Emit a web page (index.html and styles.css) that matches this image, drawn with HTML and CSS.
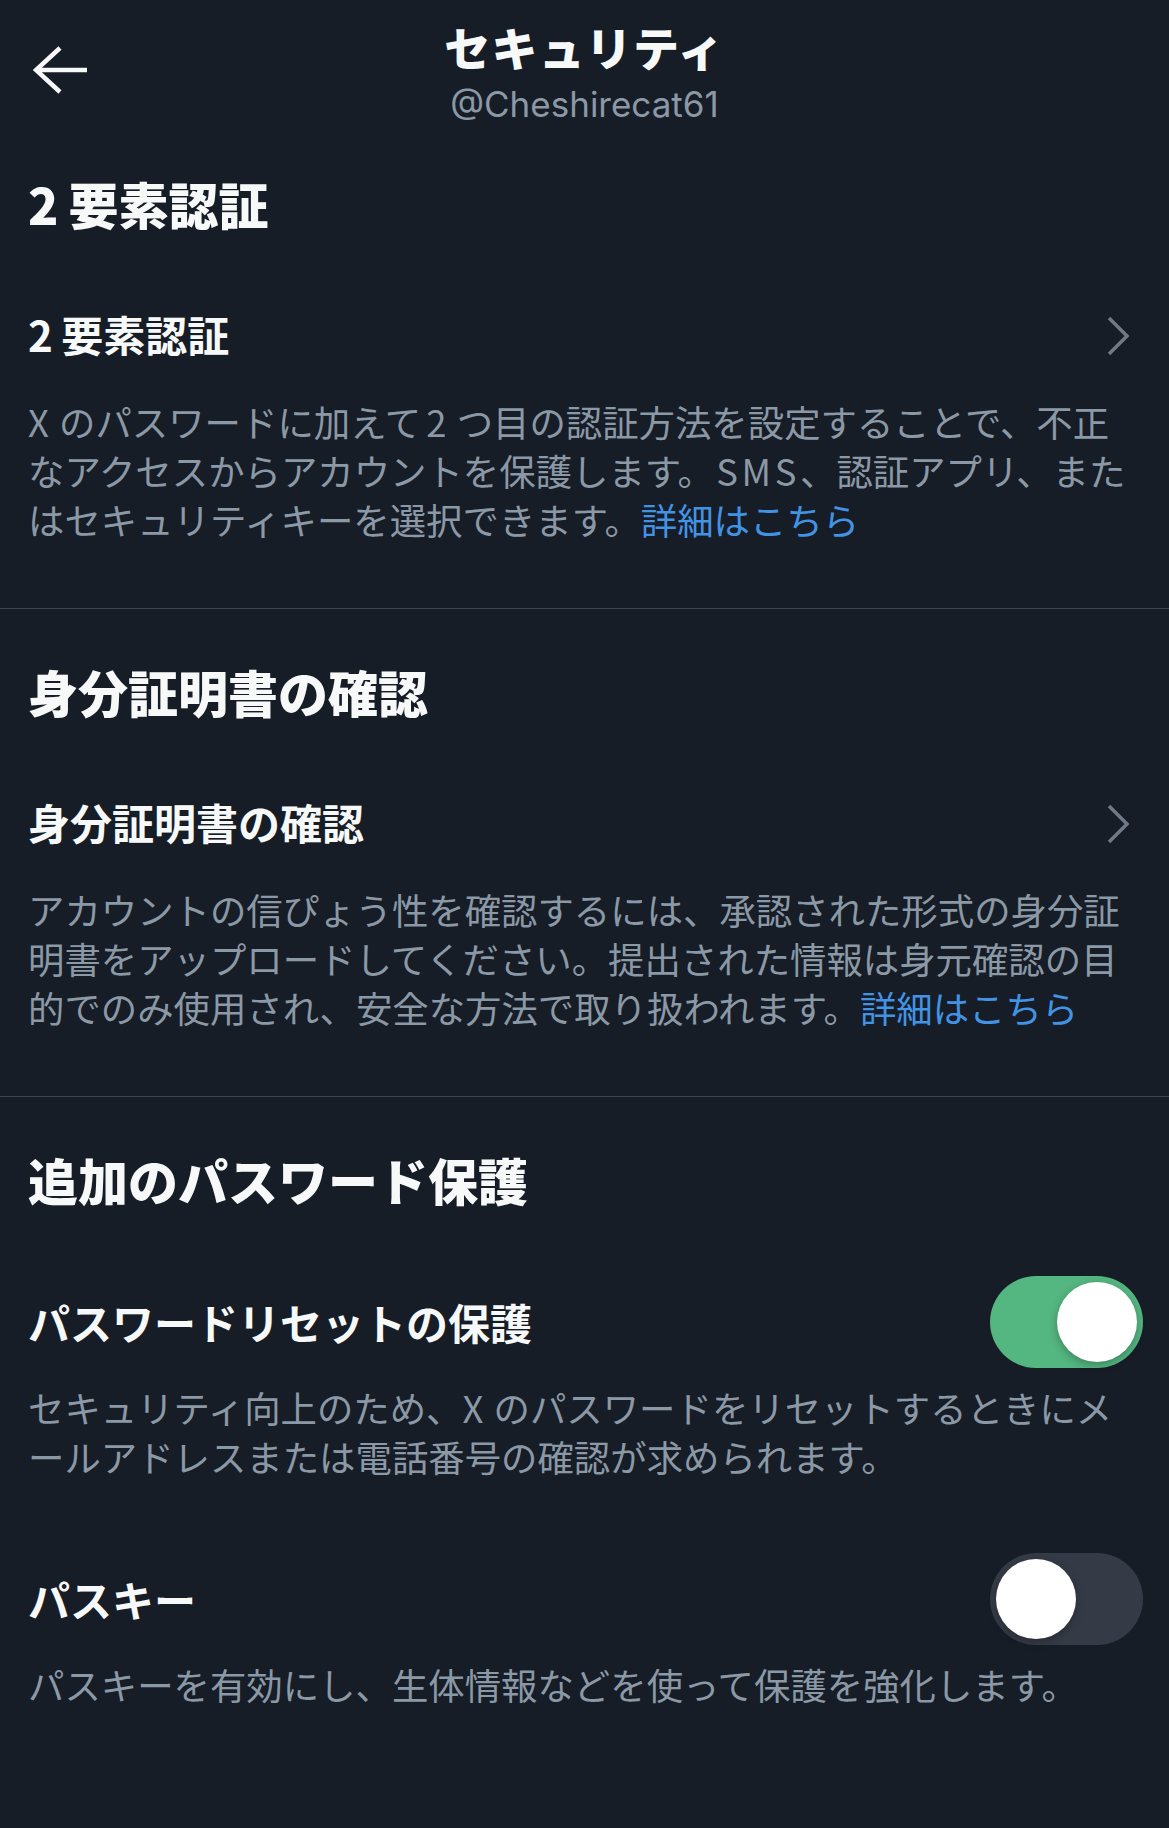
FILE: index.html
```html
<!DOCTYPE html>
<html lang="ja">
<head>
<meta charset="utf-8">
<title>セキュリティ</title>
<link rel="stylesheet" href="styles.css">
</head>
<body>
<header class="topbar">
  <div class="topbar-left">
    <svg class="back-icon" width="56" height="48" viewBox="0 0 56 48" aria-hidden="true">
      <path d="M54 24H3M27 2L3 24L27 46" fill="none" stroke="#f7f9f9" stroke-width="4.5" stroke-linejoin="miter"/>
    </svg>
  </div>
  <div class="topbar-center">
    <h1 class="page-title">セキュリティ</h1>
    <p class="handle">@Cheshirecat61</p>
  </div>
  <div class="topbar-right"></div>
</header>

<main>
  <section class="group">
    <h2 class="group-title"><span class="ltn">2</span>要素認証</h2>
    <div class="item">
      <div class="item-row">
        <h3 class="item-title"><span class="ltn">2</span>要素認証</h3>
        <svg class="chevron" width="26" height="42" viewBox="0 0 26 42" aria-hidden="true">
          <path d="M4 3L22 21L4 39" fill="none" stroke="#6f7a86" stroke-width="3.5"/>
        </svg>
      </div>
      <p class="desc"><span class="ltn">X</span>のパスワードに加えて<span class="ltn ltn-mid">2</span>つ目の認証方法を設定することで、不正<br>なアクセスからアカウントを保護します。<span class="sms">SMS</span>、認証アプリ、また<br>はセキュリティキーを選択できます。<a class="link" href="#">詳細はこちら</a></p>
    </div>
  </section>

  <hr class="divider">

  <section class="group">
    <h2 class="group-title">身分証明書の確認</h2>
    <div class="item">
      <div class="item-row">
        <h3 class="item-title">身分証明書の確認</h3>
        <svg class="chevron" width="26" height="42" viewBox="0 0 26 42" aria-hidden="true">
          <path d="M4 3L22 21L4 39" fill="none" stroke="#6f7a86" stroke-width="3.5"/>
        </svg>
      </div>
      <p class="desc">アカウントの信ぴょう性を確認するには、承認された形式の身分証<br>明書をアップロードしてください。提出された情報は身元確認の目<br>的でのみ使用され、安全な方法で取り扱われます。<a class="link" href="#">詳細はこちら</a></p>
    </div>
  </section>

  <hr class="divider">

  <section class="group group-last">
    <h2 class="group-title">追加のパスワード保護</h2>
    <div class="item item-toggle">
      <div class="item-row">
        <h3 class="item-title">パスワードリセットの保護</h3>
        <span class="switch switch-on"><span class="knob"></span></span>
      </div>
      <p class="desc">セキュリティ向上のため、<span class="ltn">X</span>のパスワードをリセットするときにメ<br>ールアドレスまたは電話番号の確認が求められます。</p>
    </div>
    <div class="item item-toggle">
      <div class="item-row">
        <h3 class="item-title">パスキー</h3>
        <span class="switch"><span class="knob"></span></span>
      </div>
      <p class="desc">パスキーを有効にし、生体情報などを使って保護を強化します。</p>
    </div>
  </section>
</main>
</body>
</html>
```

FILE: styles.css
```css
* {
  box-sizing: border-box;
}

html, body {
  margin: 0;
  padding: 0;
  background: #161d27;
}

body {
  width: 1169px;
  min-height: 1828px;
  font-family: "Noto Sans CJK JP", "Noto Sans", sans-serif;
  color: #f7f9f9;
}

/* header */
.topbar {
  display: grid;
  grid-template-columns: 1fr auto 1fr;
  align-items: center;
  padding-top: 18px;
}

.topbar-left {
  display: flex;
  align-items: center;
  padding-left: 33px;
}

.back-icon {
  display: block;
}

.topbar-center {
  display: flex;
  flex-direction: column;
  align-items: center;
}

.page-title {
  margin: 0;
  font-size: 46px;
  line-height: 56px;
  font-weight: 900;
  letter-spacing: 1.2px;
  color: #f7f9f9;
}

.handle {
  margin: 13px 0 0;
  font-family: "Inter", "Noto Sans", sans-serif;
  font-size: 35px;
  line-height: 34px;
  font-weight: 400;
  color: #8b98a5;
}

/* sections */
.group {
  padding: 52px 26px 64px 28px;
}

.group-last {
  padding-bottom: 120px;
}

.group-title {
  margin: 0;
  font-size: 50px;
  line-height: 60px;
  font-weight: 900;
  color: #f7f9f9;
}

.item {
  margin-top: 55px;
}

.item-toggle {
  margin-top: 67px;
}

.item-toggle + .item-toggle {
  margin-top: 72px;
}

.item-row {
  display: flex;
  align-items: center;
  justify-content: space-between;
  min-height: 92px;
}

.item-title {
  margin: 0;
  font-size: 42px;
  line-height: 52px;
  font-weight: 700;
  color: #f7f9f9;
}

.chevron {
  display: block;
  margin-right: 12px;
  margin-top: 4px;
}

.desc {
  margin: 17px 0 0;
  font-size: 36.4px;
  line-height: 49px;
  font-weight: 400;
  color: #8b98a5;
}

.item-toggle .desc {
  margin-top: 15px;
}

/* latin glyph next to kana: extra spacing like the native font */
.ltn {
  margin-right: 0.2em;
}

.desc .ltn {
  margin-right: 0.28em;
}

.desc .ltn-mid {
  margin-left: 0.14em;
}

.sms {
  letter-spacing: 0.1em;
  margin-left: 0.06em;
}

.link {
  color: #4393e4;
  text-decoration: none;
}

.divider {
  margin: 0;
  border: 0;
  border-top: 1px solid #3b4550;
  height: 0;
}

/* switches */
.switch {
  display: flex;
  align-items: center;
  width: 153px;
  height: 92px;
  padding: 0 6px;
  border-radius: 46px;
  background: #353b46;
  flex-shrink: 0;
}

.switch-on {
  background: #54b680;
  justify-content: flex-end;
}

.knob {
  display: block;
  width: 80px;
  height: 80px;
  border-radius: 50%;
  background: #ffffff;
  box-shadow: 0 3px 8px rgba(0, 0, 0, 0.28);
}
```
